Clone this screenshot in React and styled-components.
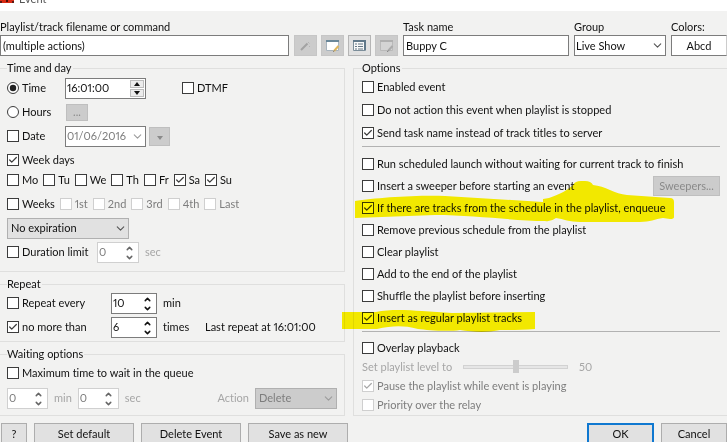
import React from "react";
import styled, { createGlobalStyle } from "styled-components";
import { Check, ChevronDown, ChevronUp } from "lucide-react";

const GlobalStyle = createGlobalStyle`
  :root {
    --face: #f2f2f1;
    --text: #111;
    --muted: #7d7d7d;
    --faint: #a6a6a6;
    --line: #dfdfde;
    --edge: #7c7c7c;
    --marker: #fff500;
  }
  * {
    box-sizing: border-box;
  }
  html,
  body {
    margin: 0;
    overflow: hidden;
    background: var(--face);
  }
  body,
  input,
  select,
  button {
    font-family: Lato, "Open Sans", sans-serif;
    font-size: 11px;
    font-variant-ligatures: none;
    font-variant-numeric: proportional-nums;
    line-height: 14px;
    color: var(--text);
  }
`;

//window

const TitleBar = styled.header`
  display: flex;
  align-items: flex-end;
  gap: 4px;
  height: 11px;
  padding-bottom: 4px;
  overflow: hidden;
  background: #fff;
`;
const AppIcon = styled.svg`
  flex: none;
  width: 15px;
  height: 15px;
`;
const Title = styled.span`
  flex: 1;
  line-height: 16px;
  color: #555;
`;
const CloseIcon = styled.svg`
  width: 10px;
  height: 10px;
  margin-bottom: 6px;
`;
const TopRow = styled.div`
  display: grid;
  grid-template-columns: minmax(0, 1fr) auto 166px 92px 56px;
  align-items: end;
  column-gap: 5px;
  padding-top: 9px;
`;
const Columns = styled.div`
  display: grid;
  grid-template-columns: minmax(0, 345fr) minmax(0, 374fr);
  column-gap: 8px;
  padding-top: 5px;
`;
const LeftColumn = styled.div`
  display: flex;
  flex-direction: column;
  gap: 5px;
`;
const Footer = styled.footer`
  display: flex;
  gap: 7px;
  padding: 7px 0 0 1px;
`;
const Spacer = styled.span`
  flex: 1;
`;

//fields

const Field = styled.div`
  display: flex;
  flex-direction: column;
  gap: 1px;
  min-width: 0;
`;
const TextInput = styled.input`
  width: 100%;
  height: 21px;
  padding: 0 2px;
  border: 1px solid var(--edge);
  background: #fff;
`;
const ColorButton = styled.button`
  height: 21px;
  padding: 0;
  border: 1px solid var(--edge);
  border-right-color: #ccc;
  background: #fff;
`;
const Tools = styled.div`
  display: flex;
  gap: 4px;
`;
const ToolButton = styled.button`
  display: grid;
  place-items: center;
  width: 23px;
  height: 21px;
  padding: 0;
  border: 1px solid ${(props) => (props.$active ? "#b5b5b5" : "#c6c6c6")};
  background: ${(props) => (props.$active ? "#e1e1e1" : "#cccccc")};
`;
const Button = styled.button`
  width: ${(props) => props.$width || 100}px;
  height: ${(props) => props.$height || 21}px;
  padding: 0;
  border: ${(props) => (props.$primary ? "2px solid #0f78d0" : "1px solid #adadad")};
  background: #e1e1e1;
  &:disabled {
    border-color: #bfbfbf;
    background: #cccccc;
    color: #8a8a8a;
  }
`;
const SelectWrap = styled.span`
  display: inline-grid;
  align-items: center;
  width: ${(props) => props.$width};
  svg {
    grid-area: 1 / 1;
    justify-self: end;
    margin-right: 2px;
    color: ${(props) => (props.$faint ? "#9c9c9c" : "#555")};
    pointer-events: none;
  }
`;
const SelectBox = styled.select`
  grid-area: 1 / 1;
  appearance: none;
  width: 100%;
  height: 21px;
  padding: 0 ${(props) => (props.$filled ? 3 : 1)}px;
  border: 1px solid ${(props) => (props.$filled ? "#b0b0b0" : "var(--edge)")};
  border-radius: 0;
  background: ${(props) => (props.$filled ? "#e1e1e1" : "#fff")};
  &:disabled {
    opacity: 1;
    color: var(--muted);
    background: ${(props) => (props.$filled ? "#cccccc" : "#fff")};
  }
`;
const SpinWrap = styled.span`
  display: inline-flex;
  flex: none;
  width: ${(props) => props.$width}px;
  height: 21px;
  border: 1px solid ${(props) => (props.$faint ? "#d0d0d0" : "var(--edge)")};
  background: #fff;
  input {
    flex: 1;
    min-width: 0;
    padding: 0 0 0 1px;
    border: 0;
    background: none;
    appearance: textfield;
  }
  input::-webkit-inner-spin-button {
    appearance: none;
  }
  input:disabled {
    color: var(--muted);
  }
`;
const Arrows = styled.span`
  display: flex;
  flex-direction: column;
  justify-content: center;
  width: ${(props) => (props.$boxed ? 16 : 18)}px;
  gap: 1px;
  padding: 1px;
`;
const ArrowButton = styled.button`
  display: grid;
  place-items: center;
  flex: 1;
  min-height: 0;
  padding: 0;
  border: ${(props) => (props.$boxed ? "1px solid #bcbcbc" : "0")};
  background: ${(props) => (props.$boxed ? "#ececec" : "none")};
  color: ${(props) => (props.disabled ? "#666" : "#111")};
`;

const Spin = ({ width, value, label, disabled, type = "number", boxed }) => {
  return (
    <SpinWrap $width={width} $faint={disabled}>
      <input type={type} defaultValue={value} aria-label={label} disabled={disabled} />
      <Arrows $boxed={boxed}>
        <ArrowButton $boxed={boxed} disabled={disabled} aria-label={`${label} up`}>
          {boxed ? <Triangle up /> : <ChevronUp size={9} strokeWidth={4} />}
        </ArrowButton>
        <ArrowButton $boxed={boxed} disabled={disabled} aria-label={`${label} down`}>
          {boxed ? <Triangle /> : <ChevronDown size={9} strokeWidth={4} />}
        </ArrowButton>
      </Arrows>
    </SpinWrap>
  );
};

const Select = ({ id, width, value, label, filled, disabled }) => {
  return (
    <SelectWrap $width={width} $faint={disabled}>
      <SelectBox id={id} $filled={filled} aria-label={label} disabled={disabled}>
        <option>{value}</option>
      </SelectBox>
      <ChevronDown size={13} strokeWidth={2} />
    </SelectWrap>
  );
};

//check boxes and radios

const CheckLabel = styled.label`
  position: relative;
  display: inline-flex;
  align-items: center;
  gap: 3px;
  white-space: nowrap;
  color: ${(props) => (props.$disabled ? "var(--muted)" : "var(--text)")};
`;
const CheckBox = styled.span`
  display: grid;
  place-items: center;
  width: 12px;
  height: 12px;
  color: ${(props) => (props.$disabled ? "#a8a8a8" : "#3c3c3c")};
  input {
    grid-area: 1 / 1;
    appearance: none;
    width: 12px;
    height: 12px;
    margin: 0;
    border: 1px solid ${(props) => (props.$disabled ? "#cfcfcf" : "#3c3c3c")};
    border-radius: ${(props) => (props.$round ? "50%" : "0")};
    background: #fff;
  }
  svg {
    grid-area: 1 / 1;
    pointer-events: none;
  }
`;

const Tick = ({ label, checked, disabled }) => {
  return (
    <CheckLabel $disabled={disabled}>
      <CheckBox $disabled={disabled}>
        <input type="checkbox" defaultChecked={checked} disabled={disabled} />
        {checked && <Check size={10} strokeWidth={3} />}
      </CheckBox>
      {label}
    </CheckLabel>
  );
};

const Radio = ({ label, checked }) => {
  return (
    <CheckLabel>
      <CheckBox $round>
        <input type="radio" name="when" defaultChecked={checked} />
        {checked && (
          <svg width="12" height="12" viewBox="0 0 12 12">
            <circle cx="6" cy="6" r="3.2" fill="#222" />
          </svg>
        )}
      </CheckBox>
      {label}
    </CheckLabel>
  );
};

//groups

const Group = styled.fieldset`
  min-width: 0;
  margin: 0;
  padding: ${(props) => props.$top || 0}px 7px ${(props) => props.$bottom || 0}px 8px;
  border: 1px solid var(--line);
  border-right-width: ${(props) => (props.$open === "right" ? 0 : 1)}px;
  ${(props) => props.$open === "left" && "border-left: 0; padding-left: 7px;"}
  legend {
    padding: 0 1px 0 0;
  }
`;
const Row = styled.div`
  position: relative;
  display: flex;
  align-items: center;
  gap: ${(props) => props.$gap || 0}px;
  height: ${(props) => props.$height || 24}px;
`;
const DayRow = styled(Row)`
  height: 16px;
  margin-bottom: 4px;
`;
const Lead = styled.span`
  display: flex;
  align-items: center;
  flex: none;
  width: ${(props) => props.$width}px;
`;
const Faint = styled.span`
  color: var(--faint);
`;
const Rule = styled.hr`
  width: 100%;
  height: 1px;
  margin: 2px 0 6px;
  border: 0;
  background: #b2b2b2;
`;
const Slider = styled.input`
  appearance: none;
  width: 105px;
  height: 14px;
  margin: 0;
  background: none;
  &::-webkit-slider-runnable-track {
    height: 4px;
    border: 1px solid #d2d2d2;
    background: #e6e6e6;
  }
  &::-webkit-slider-thumb {
    appearance: none;
    width: 6px;
    height: 13px;
    margin-top: -6px;
    background: #cccccc;
  }
`;
const Marker = styled.svg`
  position: absolute;
  top: ${(props) => props.$top}px;
  left: ${(props) => props.$left}px;
  z-index: 1;
  fill: var(--marker);
  mix-blend-mode: multiply;
  pointer-events: none;
`;

//drawings

const Triangle = ({ up }) => (
  <svg width="6" height="4" viewBox="0 0 6 4" fill="currentColor">
    <path d={up ? "M3 0 6 4H0Z" : "M0 0H6L3 4Z"} />
  </svg>
);

const WandIcon = () => (
  <svg width="15" height="15" viewBox="0 0 15 15" fill="none">
    <path d="M3 12 9.500 5.500" stroke="#a2a2a2" strokeWidth="2" />
    <path d="m10 4 1.500 1.500M11 8l1 1" stroke="#b4b4b4" />
  </svg>
);

const EditIcon = ({ gray }) => (
  <svg width="15" height="15" viewBox="0 0 15 15" fill="none">
    <path d="M1.500 2.500h12v10h-12z" fill={gray ? "#d4d4d4" : "#fff"} stroke={gray ? "#b9b9b9" : "#a8b4be"} />
    <path d="M1 3h13" stroke={gray ? "#b0b0b0" : "#6a8799"} strokeWidth="2" />
    <path d="m9 13 4.500-5" stroke={gray ? "#ababab" : "#dfb65c"} strokeWidth="2" />
    <path d="m8 14 1.500-1.500" stroke="#8a8a8a" />
  </svg>
);

const ListIcon = () => (
  <svg width="15" height="15" viewBox="0 0 15 15" fill="none">
    <path d="M1.500 2.500h12v10h-12z" fill="#f7f8f8" stroke="#7c8e9a" />
    <path d="M1 3h13M13 3v9" stroke="#61798a" strokeWidth="2" />
    <path d="M3 6h2M3 8.500h2M3 11h2M6 6h5M6 8.500h5M6 11h5" stroke="#657784" />
  </svg>
);

const weekDays = [
  { name: "Mo" },
  { name: "Tu" },
  { name: "We" },
  { name: "Th" },
  { name: "Fr" },
  { name: "Sa", checked: true },
  { name: "Su", checked: true },
];
const weeks = ["1st", "2nd", "3rd", "4th", "Last"];

const TimeAndDay = () => {
  return (
    <Group $open="left" $top={1} $bottom={7}>
      <legend>Time and day</legend>
      <Row>
        <Lead $width={58}>
          <Radio label="Time" checked />
        </Lead>
        <Lead $width={117}>
          <Spin width={81} value="16:01:00" label="Time" type="text" boxed />
        </Lead>
        <Tick label="DTMF" />
      </Row>
      <Row>
        <Lead $width={59}>
          <Radio label="Hours" />
        </Lead>
        <Button $width={22} $height={17} disabled>
          ...
        </Button>
      </Row>
      <Row>
        <Lead $width={58}>
          <Tick label="Date" />
        </Lead>
        <Lead $width={84}>
          <Select width="81px" value="01/06/2016" label="Date" disabled />
        </Lead>
        <Button $width={21} $height={19} aria-label="Calendar" disabled>
          <Triangle />
        </Button>
      </Row>
      <Row>
        <Tick label="Week days" checked />
      </Row>
      <DayRow $gap={5}>
        {weekDays.map((day) => (
          <Tick key={day.name} label={day.name} checked={day.checked} />
        ))}
      </DayRow>
      <Row $gap={5}>
        <Tick label="Weeks" />
        {weeks.map((week) => (
          <Tick key={week} label={week} disabled />
        ))}
      </Row>
      <Row>
        <Select width="122px" value="No expiration" label="Expiration" filled />
      </Row>
      <Row $gap={6}>
        <Lead $width={84}>
          <Tick label="Duration limit" />
        </Lead>
        <Spin width={42} value="0" label="Duration" disabled />
        <Faint>sec</Faint>
      </Row>
    </Group>
  );
};

const Repeat = () => {
  return (
    <Group $open="left" $bottom={2}>
      <legend>Repeat</legend>
      <Row>
        <Lead $width={104}>
          <Tick label="Repeat every" />
        </Lead>
        <Lead $width={52}>
          <Spin width={46} value="10" label="Repeat every" />
        </Lead>
        min
      </Row>
      <Row>
        <Lead $width={104}>
          <Tick label="no more than" checked />
        </Lead>
        <Lead $width={52}>
          <Spin width={46} value="6" label="No more than" />
        </Lead>
        <Lead $width={42}>times</Lead>
        Last repeat at 16:01:00
      </Row>
    </Group>
  );
};

const Waiting = () => {
  return (
    <Group $open="left" $bottom={4}>
      <legend>Waiting options</legend>
      <Row>
        <Tick label="Maximum time to wait in the queue" />
      </Row>
      <Row $height={26} $gap={6}>
        <Spin width={41} value="0" label="Wait minutes" disabled />
        <Faint>min</Faint>
        <Spin width={41} value="0" label="Wait seconds" disabled />
        <Faint>sec</Faint>
        <Spacer />
        <Faint as="label" htmlFor="action">
          Action
        </Faint>
        <Select id="action" width="82px" value="Delete" filled disabled />
      </Row>
    </Group>
  );
};

const Options = () => {
  return (
    <Group $open="right">
      <legend>Options</legend>
      <Row $height={23}>
        <Tick label="Enabled event" />
      </Row>
      <Row $height={23}>
        <Tick label="Do not action this event when playlist is stopped" />
      </Row>
      <Row $height={23}>
        <Tick label="Send task name instead of track titles to server" checked />
      </Row>
      <Rule />
      <Row $height={22}>
        <Tick label="Run scheduled launch without waiting for current track to finish" />
      </Row>
      <Row $height={22}>
        <Tick label="Insert a sweeper before starting an event" />
        <Spacer />
        <Button $width={67} $height={20} disabled>
          Sweepers...
        </Button>
      </Row>
      <Row $height={22}>
        <Tick label="If there are tracks from the schedule in the playlist, enqueue" checked />
        <Marker $top={-16} $left={-7} width="320" height="43" viewBox="0 0 320 43">
          <path d="M0 20C20 17 60 14 90 15L188 21V18L194 17C205 13 213 9 218 4Q220 0 226 0H230Q236 0 238 4C250 5 260 13 272 14L315 17Q319 17 319 21V36Q319 38 315 38L308 37C300 38 295 41 285 41H225C215 41 208 38 201 37Q196 41 190 40C160 40 120 34 80 34L0 37Z" />
        </Marker>
      </Row>
      <Row $height={22}>
        <Tick label="Remove previous schedule from the playlist" />
      </Row>
      <Row $height={22}>
        <Tick label="Clear playlist" />
      </Row>
      <Row $height={22}>
        <Tick label="Add to the end of the playlist" />
      </Row>
      <Row $height={22}>
        <Tick label="Shuffle the playlist before inserting" />
      </Row>
      <Row $height={22}>
        <Tick label="Insert as regular playlist tracks" checked />
        <Marker $top={3} $left={-20} width="193" height="23" viewBox="0 0 193 23">
          <path d="M0 2H34C48 -1 65 0 80 1L110 3 193 2V19C180 20 170 20 158 20C145 23 130 22 118 20C105 22 85 20 76 19C60 15 50 16 35 19H0Z" />
        </Marker>
      </Row>
      <Rule />
      <Row $height={19}>
        <Tick label="Overlay playback" />
      </Row>
      <Row $height={19}>
        <Lead $width={101}>
          <Faint as="label" htmlFor="level">
            Set playlist level to
          </Faint>
        </Lead>
        <Lead $width={116}>
          <Slider id="level" type="range" defaultValue={50} disabled />
        </Lead>
        <Faint>50</Faint>
      </Row>
      <Row $height={19}>
        <Tick label="Pause the playlist while event is playing" checked disabled />
      </Row>
      <Row $height={19}>
        <Tick label="Priority over the relay" disabled />
      </Row>
    </Group>
  );
};

const App = () => {
  return (
    <>
      <GlobalStyle />
      <TitleBar>
        <AppIcon viewBox="0 0 15 15">
          <path d="M0 0h14v11H0z" fill="#d92a14" />
          <path d="M5 5h4v2H8v3H6v-3H5z" fill="#4c0d08" />
          <path d="M0 9h2v2H0zM12 9h2v2h-2z" fill="#5c1a14" />
        </AppIcon>
        <Title>Event</Title>
        <CloseIcon viewBox="0 0 10 10">
          <path d="m1 1 8 8M9 1 1 9" stroke="#444" />
        </CloseIcon>
      </TitleBar>
      <TopRow>
        <Field>
          <label htmlFor="file">Playlist/track filename or command</label>
          <TextInput id="file" defaultValue="(multiple actions)" />
        </Field>
        <Tools>
          <ToolButton aria-label="Wizard">
            <WandIcon />
          </ToolButton>
          <ToolButton aria-label="Edit">
            <EditIcon />
          </ToolButton>
          <ToolButton aria-label="List" $active>
            <ListIcon />
          </ToolButton>
          <ToolButton aria-label="Edit track">
            <EditIcon gray />
          </ToolButton>
        </Tools>
        <Field>
          <label htmlFor="task">Task name</label>
          <TextInput id="task" defaultValue="Buppy C" />
        </Field>
        <Field>
          <label htmlFor="group">Group</label>
          <Select id="group" width="100%" value="Live Show" />
        </Field>
        <Field>
          <label htmlFor="colors">Colors:</label>
          <ColorButton id="colors">Abcd</ColorButton>
        </Field>
      </TopRow>
      <Columns>
        <LeftColumn>
          <TimeAndDay />
          <Repeat />
          <Waiting />
        </LeftColumn>
        <Options />
      </Columns>
      <Footer>
        <Button $width={26}>?</Button>
        <Button>Set default</Button>
        <Button>Delete Event</Button>
        <Button>Save as new</Button>
        <Spacer />
        <Button $width={67} $primary>
          OK
        </Button>
        <Button $width={66}>Cancel</Button>
      </Footer>
    </>
  );
};

export default App;
